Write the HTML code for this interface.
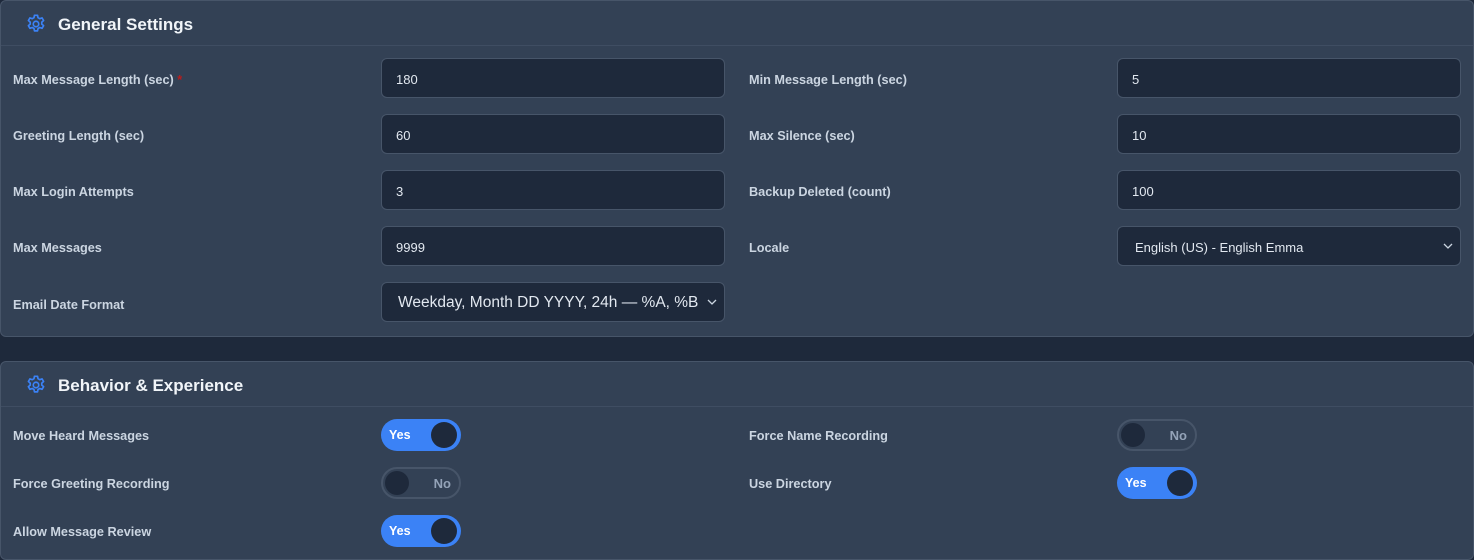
<!DOCTYPE html>
<html><head><meta charset="utf-8"><style>
*{box-sizing:border-box;margin:0;padding:0}
body{width:1474px;height:560px;background:#1e293b;font-family:"Liberation Sans",sans-serif;position:relative;overflow:hidden}
.card{position:absolute;left:0;width:1474px;background:#334155;border:1px solid #475569;border-radius:6px}
.hdr{position:absolute;left:0;right:0;top:0;height:45px;border-bottom:1px solid #3f4d62}
.hdr svg{position:absolute;left:24px;top:12px}
.hdr span{position:absolute;left:57px;top:14px;color:#f1f5f9;font-size:17px;font-weight:bold}
.lbl{position:absolute;color:#cbd5e1;font-size:12.7px;font-weight:bold}
.inp{position:absolute;width:344px;height:40px;background:#1e293b;border:1px solid #475569;border-radius:6px;color:#e2e8f0;font-size:13px;padding:13px 0 0 14px}
.chev{position:absolute;right:6px;top:13px}
.tg{position:absolute;width:80px;height:32px;border-radius:16px}
.on{background:#3b82f6}
.on b{position:absolute;left:8px;top:9px;color:#fff;font-size:12.5px}
.on i{position:absolute;right:4px;top:3px;width:26px;height:26px;border-radius:50%;background:#1e293b}
.off{background:#334155;border:2px solid #475569}
.off b{position:absolute;right:8px;top:7px;color:#94a3b8;font-size:13px}
.off i{position:absolute;left:2px;top:2px;width:24px;height:24px;border-radius:50%;background:#1e293b}
</style></head><body>
<div class="card" style="top:0;height:337px">
<div class="hdr"><svg width="22" height="22" viewBox="0 0 24 24" fill="none" stroke="#3b82f6" stroke-width="1.8" stroke-linejoin="round"><path d="M10.3 2.5h3.4l.5 2.6 1.9 1.1 2.5-.9 1.7 2.9-2 1.7v2.2l2 1.7-1.7 2.9-2.5-.9-1.9 1.1-.5 2.6h-3.4l-.5-2.6-1.9-1.1-2.5.9-1.7-2.9 2-1.7v-2.2l-2-1.7 1.7-2.9 2.5.9 1.9-1.1z"/><circle cx="12" cy="12" r="3"/></svg><span>General Settings</span></div>
</div>
<div class="lbl" style="left:13px;top:73px">Max Message Length (sec) <span style="color:#b91c1c">*</span></div>
<div class="inp" style="left:381px;top:58px">180</div>
<div class="lbl" style="left:749px;top:73px">Min Message Length (sec)</div>
<div class="inp" style="left:1117px;top:58px">5</div>
<div class="lbl" style="left:13px;top:129px">Greeting Length (sec)</div>
<div class="inp" style="left:381px;top:114px">60</div>
<div class="lbl" style="left:749px;top:129px">Max Silence (sec)</div>
<div class="inp" style="left:1117px;top:114px">10</div>
<div class="lbl" style="left:13px;top:185px">Max Login Attempts</div>
<div class="inp" style="left:381px;top:170px">3</div>
<div class="lbl" style="left:749px;top:185px">Backup Deleted (count)</div>
<div class="inp" style="left:1117px;top:170px">100</div>
<div class="lbl" style="left:13px;top:241px">Max Messages</div>
<div class="inp" style="left:381px;top:226px">9999</div>
<div class="lbl" style="left:749px;top:241px">Locale</div>
<div class="inp" style="left:1117px;top:226px;padding-left:17px">English (US) - English Emma<svg class="chev" width="12" height="12" viewBox="0 0 12 12"><path d="M2 4l4 4 4-4" stroke="#cbd5e1" fill="none" stroke-width="1.3"/></svg></div>
<div class="lbl" style="left:13px;top:298px">Email Date Format</div>
<div class="inp" style="left:381px;top:282px;font-size:15.5px;padding:11px 0 0 16px;white-space:nowrap;overflow:hidden"><span style="display:inline-block;width:302px;overflow:hidden">Weekday, Month DD YYYY, 24h — %A, %B %d %Y</span><svg class="chev" width="12" height="12" viewBox="0 0 12 12"><path d="M2 4l4 4 4-4" stroke="#cbd5e1" fill="none" stroke-width="1.3"/></svg></div>

<div class="card" style="top:361px;height:199px">
<div class="hdr" style="height:45px"><svg width="22" height="22" viewBox="0 0 24 24" fill="none" stroke="#3b82f6" stroke-width="1.8" stroke-linejoin="round"><path d="M10.3 2.5h3.4l.5 2.6 1.9 1.1 2.5-.9 1.7 2.9-2 1.7v2.2l2 1.7-1.7 2.9-2.5-.9-1.9 1.1-.5 2.6h-3.4l-.5-2.6-1.9-1.1-2.5.9-1.7-2.9 2-1.7v-2.2l-2-1.7 1.7-2.9 2.5.9 1.9-1.1z"/><circle cx="12" cy="12" r="3"/></svg><span>Behavior &amp; Experience</span></div>
</div>
<div class="lbl" style="left:13px;top:429px">Move Heard Messages</div>
<div class="tg on" style="left:381px;top:419px"><b>Yes</b><i></i></div>
<div class="lbl" style="left:749px;top:429px">Force Name Recording</div>
<div class="tg off" style="left:1117px;top:419px"><i></i><b>No</b></div>
<div class="lbl" style="left:13px;top:477px">Force Greeting Recording</div>
<div class="tg off" style="left:381px;top:467px"><i></i><b>No</b></div>
<div class="lbl" style="left:749px;top:477px">Use Directory</div>
<div class="tg on" style="left:1117px;top:467px"><b>Yes</b><i></i></div>
<div class="lbl" style="left:13px;top:525px">Allow Message Review</div>
<div class="tg on" style="left:381px;top:515px"><b>Yes</b><i></i></div>
</body></html>
